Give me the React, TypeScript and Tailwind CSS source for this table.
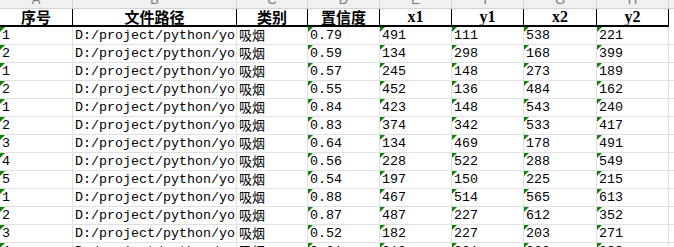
import React from 'react';

const widths = [73, 164, 71, 72, 72, 72, 73, 72];
const letters = ['A', 'B', 'C', 'D', 'E', 'F', 'G', 'H'];
const headers = ['序号', '文件路径', '类别', '置信度', 'x1', 'y1', 'x2', 'y2'];
const flagged = [true, false, false, true, true, true, true, true];

const rows: string[][] = [
  ['1', '0.79', '491', '111', '538', '221'],
  ['2', '0.59', '134', '298', '168', '399'],
  ['1', '0.57', '245', '148', '273', '189'],
  ['2', '0.55', '452', '136', '484', '162'],
  ['1', '0.84', '423', '148', '543', '240'],
  ['2', '0.83', '374', '342', '533', '417'],
  ['3', '0.64', '134', '469', '178', '491'],
  ['4', '0.56', '228', '522', '288', '549'],
  ['5', '0.54', '197', '150', '225', '215'],
  ['1', '0.88', '467', '514', '565', '613'],
  ['2', '0.87', '487', '227', '612', '352'],
  ['3', '0.52', '182', '227', '203', '271'],
  ['4', '0.61', '210', '301', '260', '388'],
];

const mono = "font-['Liberation_Mono','Noto_Sans_CJK_SC',monospace]";
const cjk = "font-['Noto_Sans_CJK_SC',sans-serif]";

const Flag = () => (
  <span className="absolute left-0 top-0 h-[5px] w-[5px] bg-[#10800f] [clip-path:polygon(0_0,100%_0,0_100%)]" />
);

const DataRow: React.FC<{ r: string[] }> = ({ r }) => {
  const cells = [r[0], 'D:/project/python/yo', '吸烟', r[1], r[2], r[3], r[4], r[5]];
  return (
    <div className="flex h-[18px]">
      {cells.map((c, i) => (
        <div
          key={i}
          style={{ width: widths[i] }}
          className="relative flex h-[18px] shrink-0 items-end overflow-hidden whitespace-nowrap border-r border-b border-[#e1e1e1] pb-[1px] pl-[2px]"
        >
          {flagged[i] && <Flag />}
          <span className={i === 2 ? `${cjk} text-[13px] leading-[16px] text-black` : `${mono} text-[13.33px] leading-[15px] text-black`}>
            {c}
          </span>
        </div>
      ))}
      <div className="h-[18px] w-[6px] shrink-0 border-r border-b border-[#e1e1e1]" />
    </div>
  );
};

export default function App() {
  return (
    <div className="h-[247px] w-[674px] overflow-hidden bg-white">
      {/* column letters, mostly scrolled out of view */}
      <div className="flex h-[9px] bg-[#f0f0f0]">
        {widths.map((w, i) => (
          <div
            key={i}
            style={{ width: w }}
            className="flex h-[9px] shrink-0 justify-center overflow-hidden border-r border-b border-[#d4d4d4]"
          >
            <span className="-mt-[7px] font-['Liberation_Sans',sans-serif] text-[13px] leading-[13px] text-[#777]">
              {letters[i]}
            </span>
          </div>
        ))}
        <div className="h-[9px] w-[6px] shrink-0 border-r border-b border-[#d4d4d4]" />
      </div>

      {/* header */}
      <div className="flex h-[18px]">
        {headers.map((h, i) => (
          <div
            key={i}
            style={{ width: widths[i] }}
            className="flex h-[18px] shrink-0 items-end justify-center overflow-hidden border-r border-b-2 border-black"
          >
            <span
              className={
                i >= 4
                  ? "font-['Liberation_Serif',serif] text-[16px] font-bold leading-[17px] text-black"
                  : `${cjk} text-[15px] font-bold leading-[17px] text-black`
              }
            >
              {h}
            </span>
          </div>
        ))}
        <div className="h-[18px] w-[6px] shrink-0 border-r border-[#e1e1e1]" />
      </div>

      {rows.map((r, i) => (
        <DataRow key={i} r={r} />
      ))}
    </div>
  );
}
